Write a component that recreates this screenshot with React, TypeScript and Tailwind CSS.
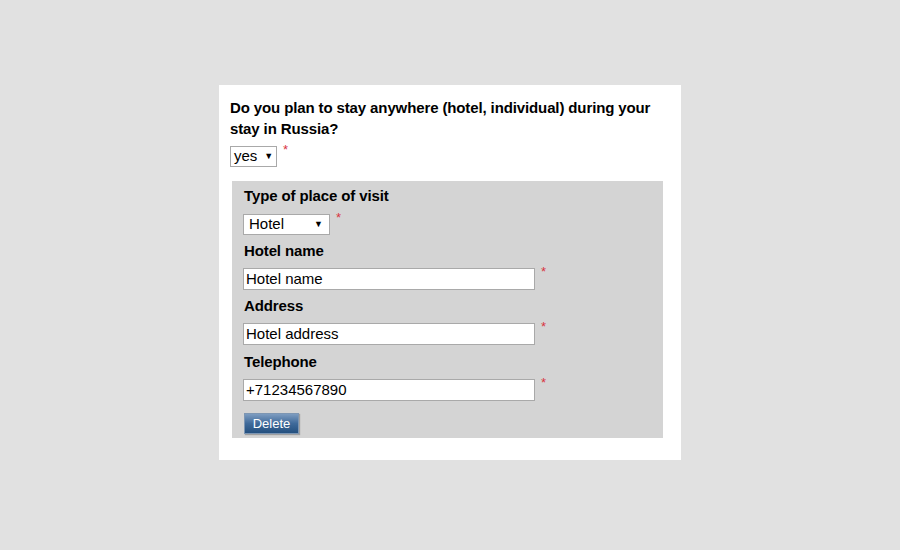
import React, { useState } from 'react';

const Star = () => <span className="ml-[6px] -mt-[3px] self-start text-[13px] leading-none text-[#d8343f]">*</span>;

const Field: React.FC<{ label: string; value: string }> = ({ label, value }) => {
  const [v, setV] = useState(value);
  return (
    <div className="flex flex-col">
      <div className="h-[22px] pl-[1px] text-[15px] font-bold leading-[22px] tracking-[-0.12px] text-black">{label}</div>
      <div className="mt-[6px] flex">
        <input
          value={v}
          onChange={(e) => setV(e.target.value)}
          className="h-[22px] w-[292px] border border-[#a9a9a9] bg-white px-[2px] text-[15px] text-black outline-none"
        />
        <Star />
      </div>
    </div>
  );
};

export default function App() {
  return (
    <div
      className="flex min-h-[550px] w-full items-start justify-center bg-[#e1e1e1] pt-[85px]"
      style={{ fontFamily: '"Liberation Sans", Arial, sans-serif' }}
    >
      <div className="w-[462px] bg-white px-[11px] pb-[22px] pt-[12px]">
        <div className="text-[15px] font-bold leading-[21px] tracking-[-0.12px] text-black">
          Do you plan to stay anywhere (hotel, individual) during your stay in Russia?
        </div>
        <div className="mt-[7px] flex">
          <div className="flex h-[21px] w-[47px] items-center border border-[#a9a9a9] bg-white pl-[3px] text-[15px] text-black">
            yes<span className="ml-[7px] text-[9px]">▼</span>
          </div>
          <Star />
        </div>
        <div className="ml-[2px] mt-[14px] w-[431px] bg-[#d4d4d4] px-[11px] pb-[3px] pt-[4px]">
          <div className="h-[22px] pl-[1px] text-[15px] font-bold leading-[22px] tracking-[-0.12px] text-black">Type of place of visit</div>
          <div className="mt-[7px] flex">
            <div className="flex h-[21px] w-[87px] items-center justify-between border border-[#a9a9a9] bg-white pl-[5px] pr-[6px] text-[15px] text-black">
              Hotel<span className="text-[9px]">▼</span>
            </div>
            <Star />
          </div>
          <div className="mt-[5px] flex flex-col gap-[5px]">
            <Field label="Hotel name" value="Hotel name" />
            <Field label="Address" value="Hotel address" />
            <div className="mt-[1px]">
              <Field label="Telephone" value="+71234567890" />
            </div>
          </div>
          <button className="ml-[1px] mt-[12px] h-[21px] w-[55px] border border-[#7d96b3] bg-gradient-to-b from-[#7d9cc0] via-[#3f6a9a] to-[#24507f] text-[13px] leading-none text-white shadow-[1px_1px_1px_rgba(0,0,0,0.25)]">
            Delete
          </button>
        </div>
      </div>
    </div>
  );
}
